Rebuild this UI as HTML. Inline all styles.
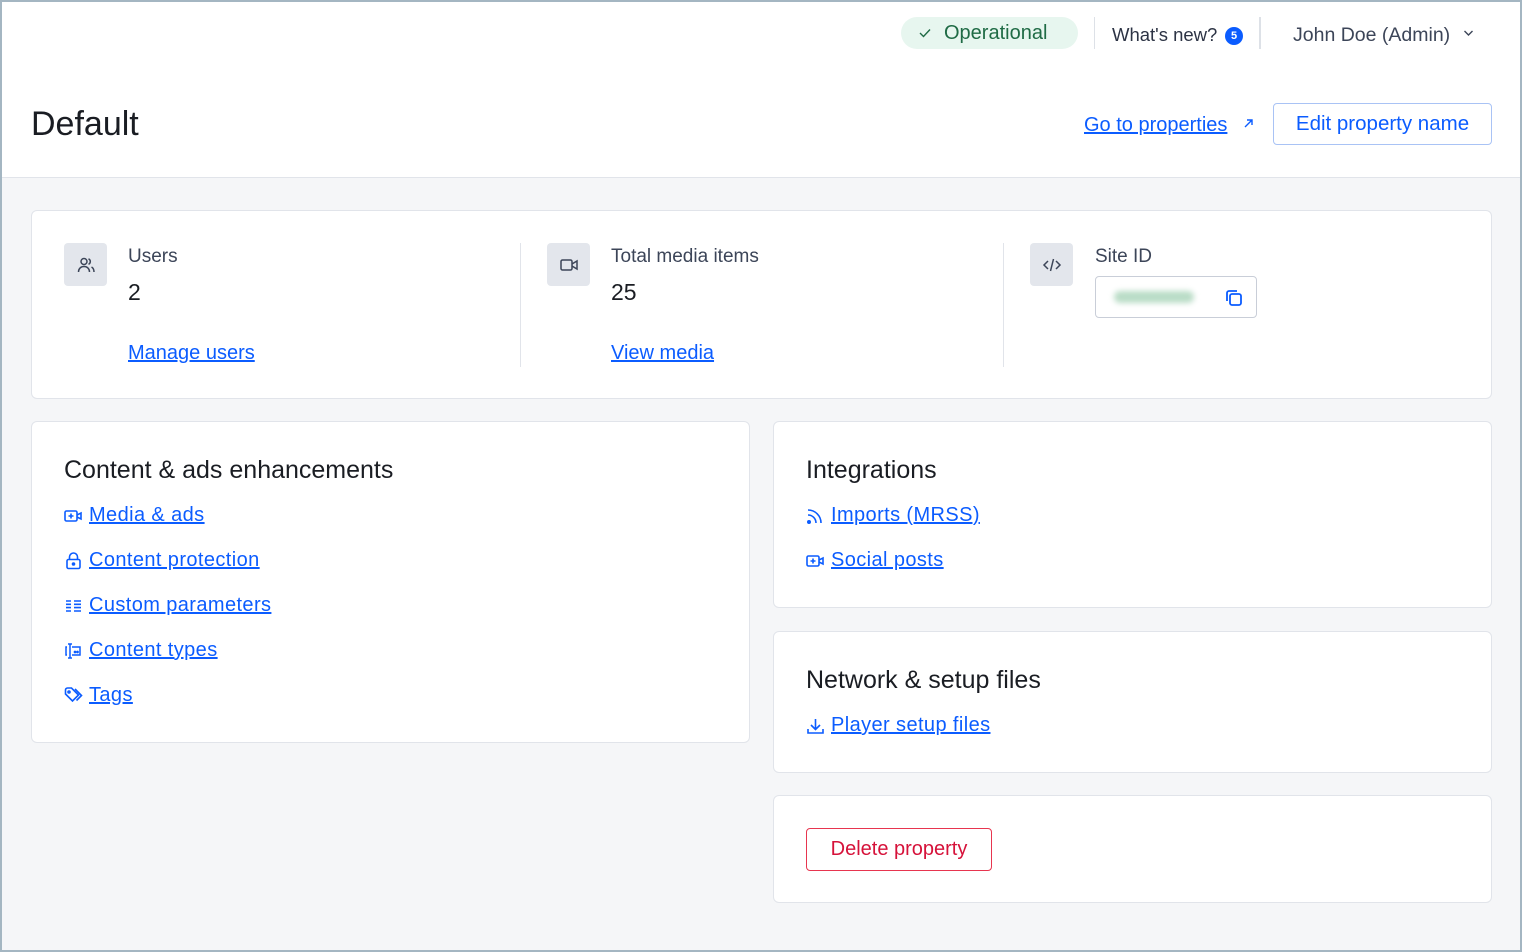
<!DOCTYPE html>
<html><head><style>
*{box-sizing:border-box;margin:0;padding:0}
body{width:1522px;height:952px;font-family:"Liberation Sans",sans-serif;background:#f5f6f8;position:relative;overflow:hidden;color:#1a1d23}
.frame{position:absolute;inset:0;border:2px solid #a4b6c2;pointer-events:none;z-index:10}
.hdr{position:absolute;left:0;top:0;width:1522px;height:178px;background:#fff;border-bottom:1px solid #e1e4ea}
.abs{position:absolute}
a{color:#0b5cff;text-decoration:underline}
.card{position:absolute;background:#fff;border:1px solid #e1e4ea;border-radius:6px}
.ib{position:absolute;width:43px;height:43px;background:#e3e6ec;border-radius:4px;display:flex;align-items:center;justify-content:center}
.lbl{font-size:19px;color:#3c4558}
.big{font-size:23px;color:#1a1d23}
.h{font-size:25px;color:#1a1d23}
.lnk{position:absolute;font-size:20px;letter-spacing:0.4px;display:flex;align-items:center;gap:6px}
.lnk svg{flex:none}
</style></head><body>
<div class="frame"></div>
<div class="hdr">
 <div class="abs" style="left:901px;top:17px;width:177px;height:32px;border-radius:16px;background:#e7f6ef;color:#1f6b45;font-size:20px;display:flex;align-items:center;padding-left:18px">
  <svg width="12" height="10" viewBox="0 0 12 10"><path d="M1 5l3.5 3.5L11 1.5" fill="none" stroke="#1f6b45" stroke-width="1.4"/></svg><span style="margin-left:13px">Operational</span></div>
 <div class="abs" style="left:1094px;top:17px;width:1px;height:32px;background:#dde1e7"></div>
 <div class="abs" style="left:1112px;top:24px;font-size:18.5px;color:#2c3344">What's new?</div>
 <div class="abs" style="left:1225px;top:27px;width:18px;height:18px;border-radius:50%;background:#0b5cff;color:#fff;font-size:11px;font-weight:bold;text-align:center;line-height:18px">5</div>
 <div class="abs" style="left:1259px;top:17px;width:2px;height:32px;background:#dde1e7"></div>
 <div class="abs" style="left:1293px;top:24px;font-size:19.5px;color:#3c4558">John Doe (Admin)</div>
 <svg class="abs" style="left:1463px;top:29px" width="11" height="8" viewBox="0 0 11 8"><path d="M1.5 2l4 4 4-4" fill="none" stroke="#3c4558" stroke-width="1.4"/></svg>
 <div class="abs" style="left:31px;top:105px;font-size:34px;color:#1a1d23">Default</div>
 <a class="abs" style="left:1084px;top:114px;font-size:20px">Go to properties</a>
 <svg class="abs" style="left:1243px;top:118px" width="11" height="11" viewBox="0 0 11 11"><path d="M2 9l7-7M4 2h5v5" fill="none" stroke="#0b5cff" stroke-width="1.4"/></svg>
 <div class="abs" style="left:1273px;top:103px;width:219px;height:42px;border:1px solid #a9c3f5;border-radius:4px;color:#0b5cff;font-size:20.5px;text-align:center;line-height:40px">Edit property name</div>
</div>

<div class="card" style="left:31px;top:210px;width:1461px;height:189px">
 <div class="ib" style="left:32px;top:32px"><svg width="20" height="20" viewBox="0 0 20 20" fill="none" stroke="#3c4558" stroke-width="1.5"><circle cx="8" cy="6.5" r="3"/><path d="M2.5 17c0-3.5 2.5-5.5 5.5-5.5s5.5 2 5.5 5.5M12.5 3.8a3 3 0 010 5.5M15.5 12c1.5.8 2.5 2.5 2.5 5"/></svg></div>
 <div class="abs lbl" style="left:96px;top:35px">Users</div>
 <div class="abs big" style="left:96px;top:68px">2</div>
 <a class="abs" style="left:96px;top:131px;font-size:20px">Manage users</a>
 <div class="abs" style="left:488px;top:32px;width:1px;height:124px;background:#e1e4ea"></div>
 <div class="ib" style="left:515px;top:32px"><svg width="20" height="20" viewBox="0 0 20 20" fill="none" stroke="#3c4558" stroke-width="1.5"><rect x="2" y="5" width="11" height="10" rx="1.5"/><path d="M13 9l5-3v8l-5-3"/></svg></div>
 <div class="abs lbl" style="left:579px;top:35px">Total media items</div>
 <div class="abs big" style="left:579px;top:68px">25</div>
 <a class="abs" style="left:579px;top:131px;font-size:20px">View media</a>
 <div class="abs" style="left:971px;top:32px;width:1px;height:124px;background:#e1e4ea"></div>
 <div class="ib" style="left:998px;top:32px"><svg width="20" height="20" viewBox="0 0 20 20" fill="none" stroke="#3c4558" stroke-width="1.5"><path d="M6 6l-4 4 4 4M14 6l4 4-4 4M11.5 4l-3 12"/></svg></div>
 <div class="abs lbl" style="left:1063px;top:35px">Site ID</div>
 <div class="abs" style="left:1063px;top:65px;width:162px;height:42px;border:1px solid #c9ced8;border-radius:4px">
  <div class="abs" style="left:18px;top:14px;width:80px;height:12px;border-radius:6px;background:#b9dcc6;filter:blur(3px)"></div>
  <svg class="abs" style="left:128px;top:11px" width="20" height="20" viewBox="0 0 20 20" fill="none" stroke="#0b5cff" stroke-width="1.8"><rect x="6" y="6" width="11" height="11" rx="2"/><path d="M3 13V5a2 2 0 012-2h8"/></svg>
 </div>
</div>

<div class="card" style="left:31px;top:421px;width:719px;height:322px">
 <div class="abs h" style="left:32px;top:34px">Content &amp; ads enhancements</div>
 <div class="lnk" style="left:32px;top:82px"><svg width="19" height="16" viewBox="0 0 19 16" fill="none" stroke="#0b5cff" stroke-width="1.6"><rect x="1" y="3" width="12" height="10" rx="1.5"/><path d="M13 7l4-2v6l-4-2M7 5.5v5M4.5 8h5"/></svg><a>Media &amp; ads</a></div>
 <div class="lnk" style="left:32px;top:127px"><svg width="19" height="18" viewBox="0 0 19 18" fill="none" stroke="#0b5cff" stroke-width="1.6"><rect x="3" y="7.5" width="13" height="9" rx="1.5"/><path d="M5.5 7.5V5a4 4 0 018 0v2.5"/><circle cx="9.5" cy="12" r="1" fill="#0b5cff"/></svg><a>Content protection</a></div>
 <div class="lnk" style="left:32px;top:172px"><svg width="19" height="16" viewBox="0 0 19 16" fill="none" stroke="#0b5cff" stroke-width="1.6"><path d="M2 3h5M2 6.3h5M2 9.6h5M2 13h5M10 3h7M10 6.3h7M10 9.6h7M10 13h7"/></svg><a>Custom parameters</a></div>
 <div class="lnk" style="left:32px;top:217px"><svg width="19" height="18" viewBox="0 0 19 18" fill="none" stroke="#0b5cff" stroke-width="1.5"><path d="M4 2h4M6 2v14M4 16h4M8 5h8v8H8M3 5H2v8h1"/><circle cx="11" cy="10" r=".6" fill="#0b5cff"/><circle cx="13.5" cy="10" r=".6" fill="#0b5cff"/></svg><a>Content types</a></div>
 <div class="lnk" style="left:32px;top:262px"><svg width="19" height="17" viewBox="0 0 19 17" fill="none" stroke="#0b5cff" stroke-width="1.6"><path d="M1.5 3v4l7 7 6-6-7-7h-4a2 2 0 00-2 2zM11 2l6.5 6.5-5 5"/><circle cx="5" cy="5" r="1"/></svg><a>Tags</a></div>
</div>

<div class="card" style="left:773px;top:421px;width:719px;height:187px">
 <div class="abs h" style="left:32px;top:34px">Integrations</div>
 <div class="lnk" style="left:32px;top:82px"><svg width="19" height="18" viewBox="0 0 19 18" fill="none" stroke="#0b5cff" stroke-width="1.6"><path d="M2 3a13 13 0 0113 13M2 8a8 8 0 018 8"/><circle cx="3" cy="15" r="1.2" fill="#0b5cff"/></svg><a>Imports (MRSS)</a></div>
 <div class="lnk" style="left:32px;top:127px"><svg width="19" height="16" viewBox="0 0 19 16" fill="none" stroke="#0b5cff" stroke-width="1.6"><rect x="1" y="3" width="12" height="10" rx="1.5"/><path d="M13 7l4-2v6l-4-2M7 5.5v5M4.5 8h5"/></svg><a>Social posts</a></div>
</div>

<div class="card" style="left:773px;top:631px;width:719px;height:142px">
 <div class="abs h" style="left:32px;top:34px">Network &amp; setup files</div>
 <div class="lnk" style="left:32px;top:82px"><svg width="19" height="18" viewBox="0 0 19 18" fill="none" stroke="#0b5cff" stroke-width="1.6"><path d="M9.5 2v10M5 8l4.5 4.5L14 8M2 12v4h15v-4"/></svg><a>Player setup files</a></div>
</div>

<div class="card" style="left:773px;top:795px;width:719px;height:108px">
 <div class="abs" style="left:32px;top:32px;width:186px;height:43px;border:1px solid #e7354f;border-radius:4px;color:#d6123a;font-size:20px;text-align:center;line-height:41px">Delete property</div>
</div>
</body></html>
